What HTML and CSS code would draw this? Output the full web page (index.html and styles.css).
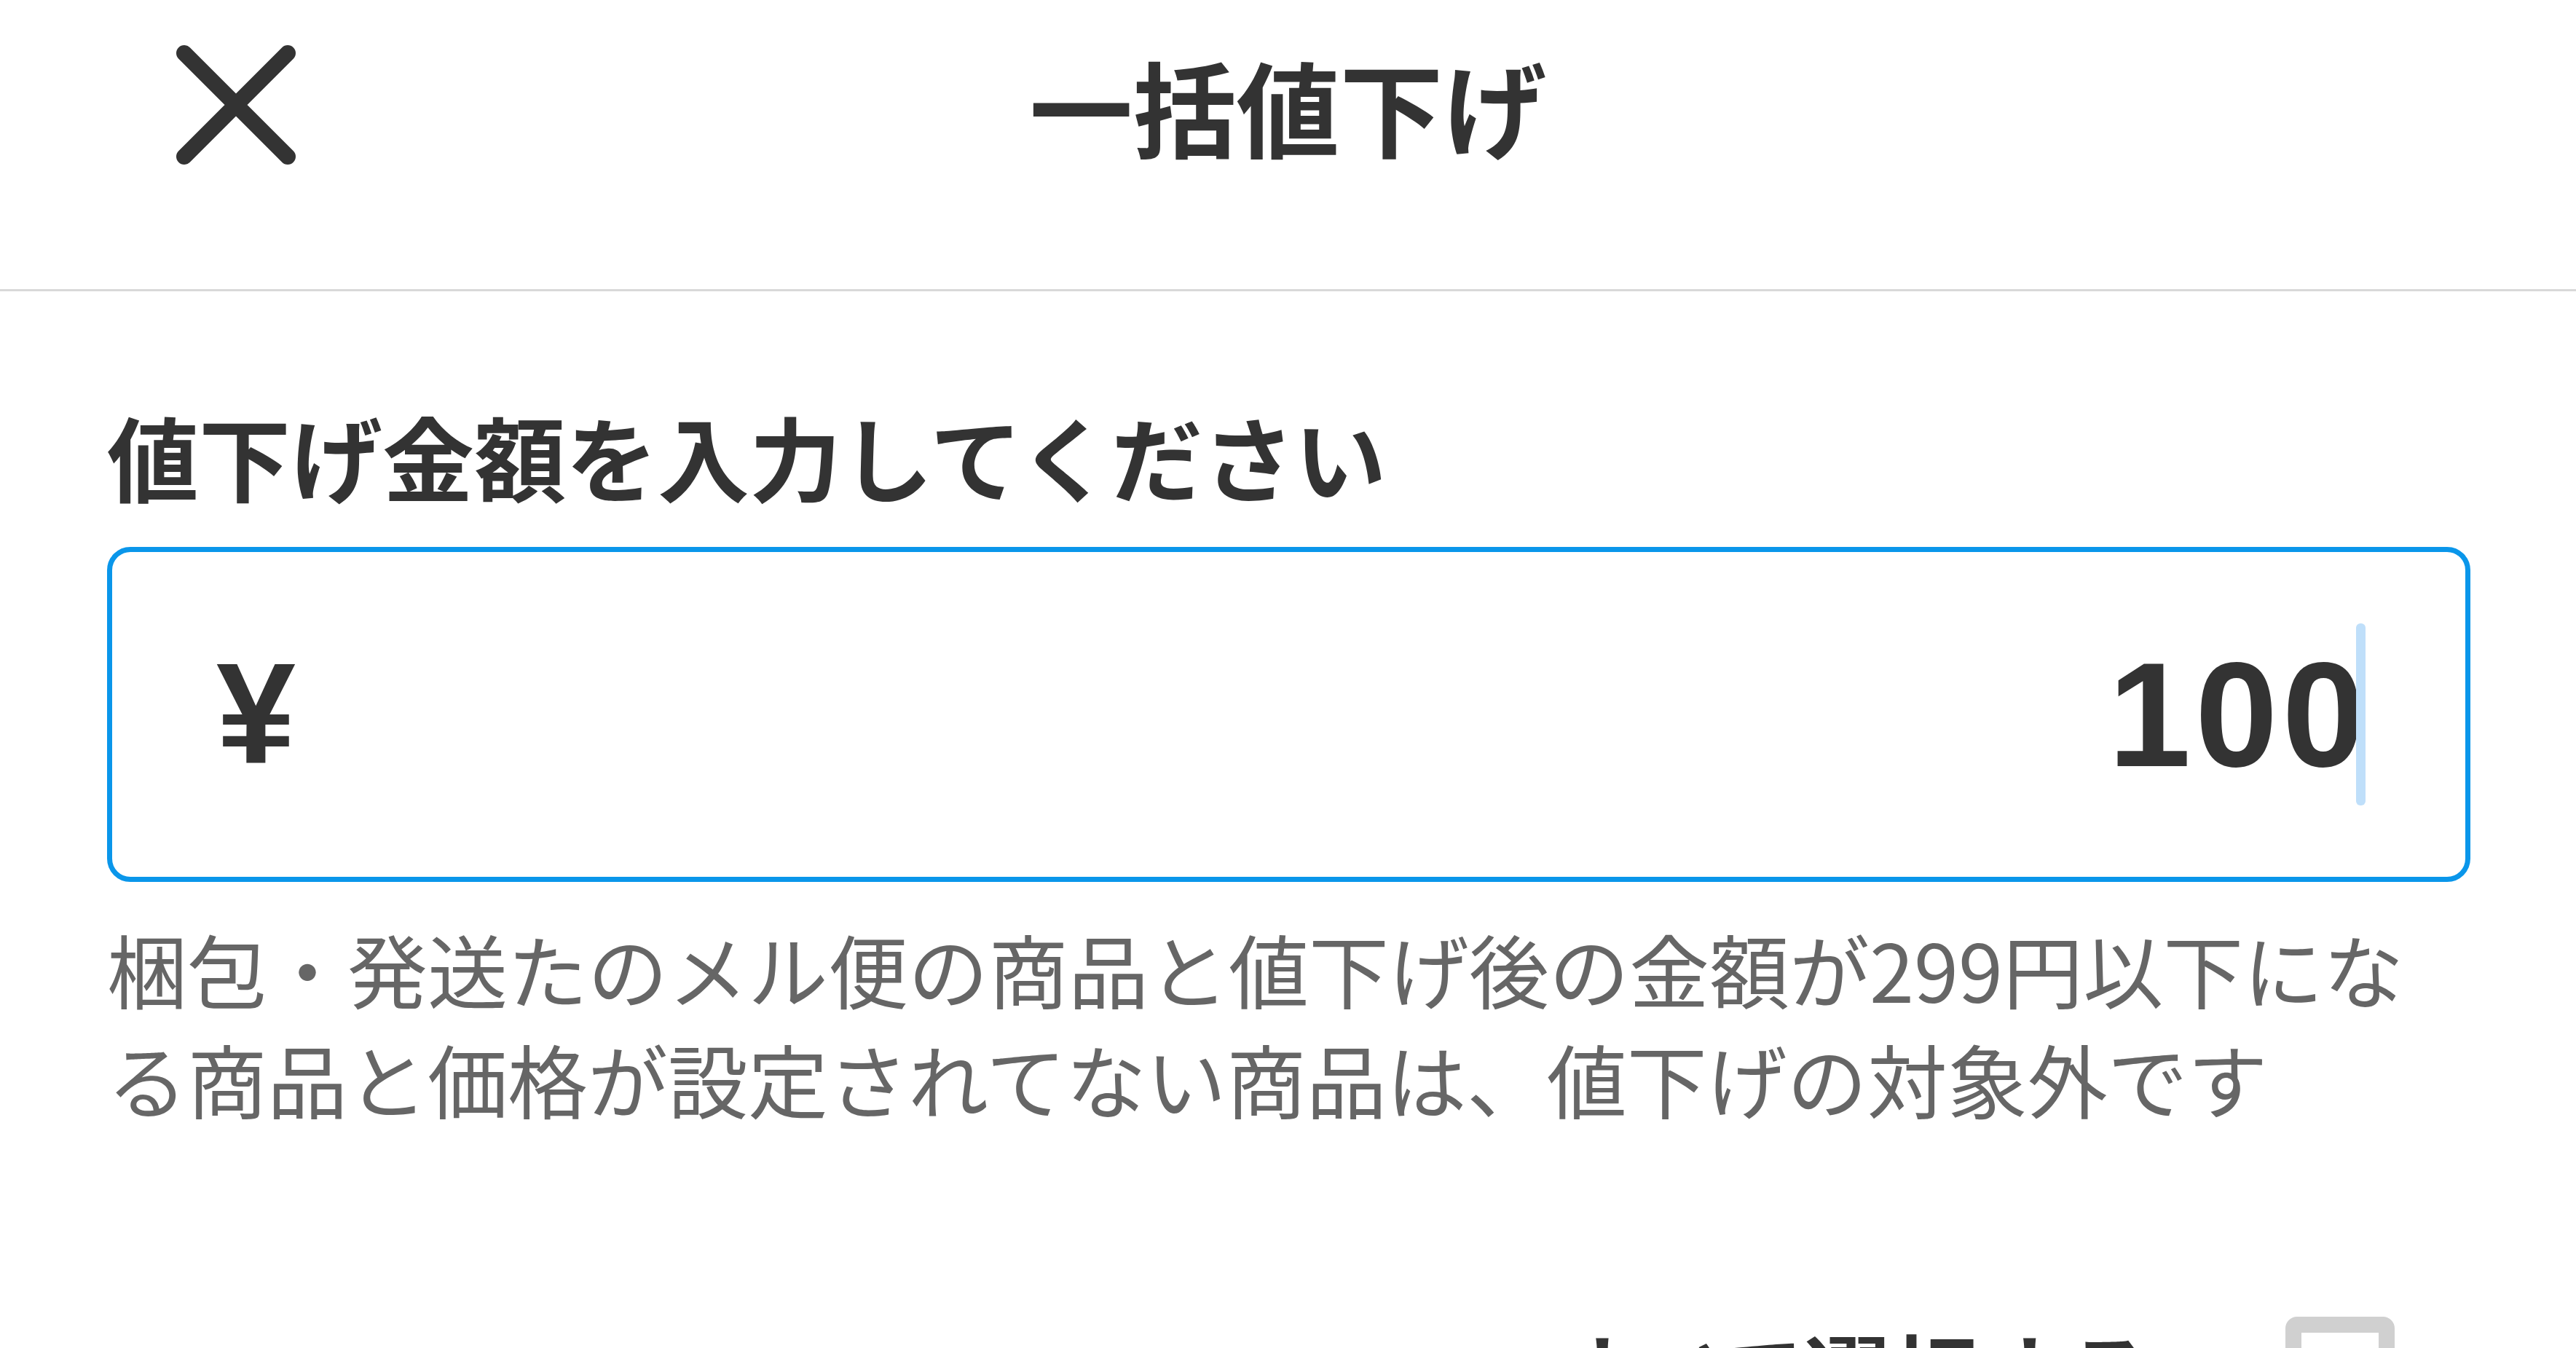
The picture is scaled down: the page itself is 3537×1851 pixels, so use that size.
FILE: index.html
```html
<!DOCTYPE html>
<html lang="ja">
<head>
<meta charset="utf-8">
<title>一括値下げ</title>
<link rel="stylesheet" href="styles.css">
</head>
<body>
<header class="header">
  <div class="header-row">
    <div class="header-left">
      <button class="close-btn" aria-label="閉じる">
        <svg class="close-icon" viewBox="0 0 164 164" width="164" height="164">
          <path d="M11 11 L153 153 M153 11 L11 153" stroke="#333" stroke-width="22" stroke-linecap="round" fill="none"/>
        </svg>
      </button>
    </div>
    <h1 class="title">一括値下げ</h1>
    <div class="header-right"></div>
  </div>
</header>
<main class="content">
  <p class="label">値下げ金額を入力してください</p>
  <div class="price-input">
    <span class="yen">¥</span>
    <span class="value-wrap"><span class="value">100</span><span class="caret"></span></span>
  </div>
  <p class="note">梱包・発送たのメル便の商品と値下げ後の金額が299円以下になる商品と価格が設定されてない商品は、値下げの対象外です</p>
  <div class="select-all">
    <span class="select-text">すべて選択する</span>
    <span class="checkbox"></span>
  </div>
</main>
</body>
</html>
```

FILE: styles.css
```css
html, body {
  margin: 0;
  padding: 0;
  height: 100%;
  overflow: hidden;
  background: #ffffff;
}

body {
  font-family: "Noto Sans CJK JP", "Noto Sans", sans-serif;
  color: #333333;
}

.header {
  height: 397px;
  border-bottom: 3px solid #d8d8d8;
}

.header-row {
  height: 288px;
  display: grid;
  grid-template-columns: 1fr auto 1fr;
  align-items: center;
}

.header-left {
  display: flex;
  align-items: center;
  padding-left: 242px;
}

.close-btn {
  border: 0;
  background: none;
  padding: 0;
  margin: 0;
  width: 164px;
  height: 164px;
  display: block;
}

.close-icon {
  display: block;
}

.title {
  margin: 0;
  font-size: 142px;
  line-height: 288px;
  font-weight: 700;
  color: #333333;
  white-space: nowrap;
}

.content {
  padding: 0 145px 0 147px;
}

.label {
  margin: 137px 0 0 0;
  font-size: 126px;
  line-height: 176px;
  font-weight: 700;
  color: #333333;
  white-space: nowrap;
}

.price-input {
  margin-top: 38px;
  box-sizing: border-box;
  height: 460px;
  border: 7px solid #0a96ea;
  border-radius: 32px;
  padding: 0 137px 0 143px;
  display: flex;
  align-items: center;
  justify-content: space-between;
}

.yen {
  font-family: "Liberation Sans", "Noto Sans", sans-serif;
  font-weight: 700;
  font-size: 196px;
  line-height: 1;
  color: #333333;
}

.value-wrap {
  display: flex;
  align-items: center;
}

.value {
  font-family: "Liberation Sans", "Noto Sans", sans-serif;
  font-weight: 700;
  font-size: 204px;
  letter-spacing: 6px;
  line-height: 1;
  color: #333333;
}

.caret {
  display: block;
  width: 13px;
  height: 250px;
  margin-left: -18px;
  border-radius: 6px;
  background: #bfdffa;
}

.note {
  margin: 43px 0 0 0;
  font-size: 110px;
  line-height: 151px;
  color: #666666;
}

.select-all {
  margin-top: 252px;
  padding-right: 104px;
  height: 150px;
  display: flex;
  align-items: center;
  justify-content: flex-end;
  gap: 181px;
}

.select-text {
  font-size: 120px;
  line-height: 1.2;
  font-weight: 700;
  color: #333333;
  white-space: nowrap;
}

.checkbox {
  box-sizing: border-box;
  width: 150px;
  height: 150px;
  border: 22px solid #d0d0d0;
  border-radius: 16px;
  background: #ffffff;
}
```
